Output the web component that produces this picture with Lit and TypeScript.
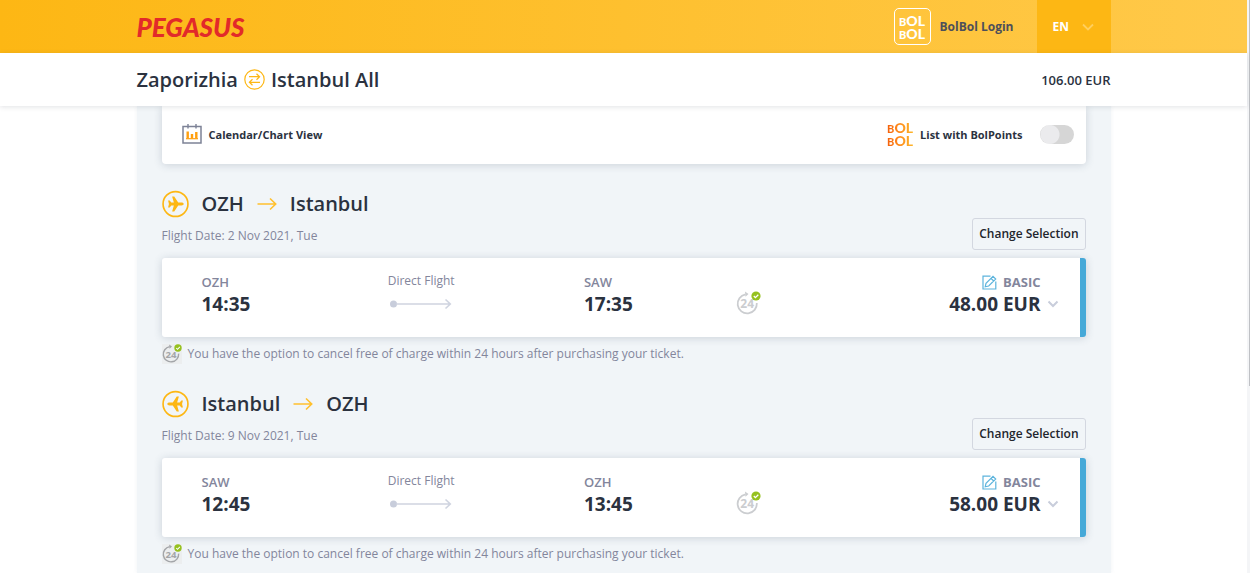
import { LitElement, html, css } from "lit";
import { customElement, property, state } from "lit/decorators.js";

interface Flight {
  id: string;
  from: string;
  to: string;
  date: string;
  inbound: boolean;
  depCode: string;
  depTime: string;
  arrCode: string;
  arrTime: string;
  price: string;
}

const FLIGHTS: Flight[] = [
  {
    id: "outbound", from: "OZH", to: "Istanbul", date: "2 Nov 2021, Tue", inbound: false,
    depCode: "OZH", depTime: "14:35", arrCode: "SAW", arrTime: "17:35", price: "48.00 EUR",
  },
  {
    id: "inbound", from: "Istanbul", to: "OZH", date: "9 Nov 2021, Tue", inbound: true,
    depCode: "SAW", depTime: "12:45", arrCode: "OZH", arrTime: "13:45", price: "58.00 EUR",
  },
];

const bolStyles = css`
  .bol {
    display: block;
    width: 26px;
    font: 900 14px/13px Lato, sans-serif;
  }
  .bol.warm {
    background: linear-gradient(90deg, #f4600c, #ff8a1a 45%, #fdb62b);
    -webkit-background-clip: text;
    background-clip: text;
    color: transparent;
  }
  .bol .row {
    display: flex;
    align-items: baseline;
    height: 13px;
  }
  .bol .b { font-size: 11px; }
`;

const bolRow = html`<span class="row"><span class="b">B</span><span>OL</span></span>`;

const bolMark = (tone: string) => html`<span class="bol ${tone}">${bolRow}${bolRow}</span>`;

const plane = (flip: boolean) => html`
  <svg width="27" height="28" viewBox="0 0 28 28" aria-hidden="true">
    <circle cx="14" cy="14" r="12.9" fill="none" stroke="#fdb714" stroke-width="1.7"></circle>
    <path
      transform=${flip ? "translate(28 0) scale(-1 1)" : ""}
      fill="#fdb714"
      d="M22.500 14c0 .9-1 1.500-2.400 1.500h-3.300L12.700 21.800h-2.200l1.800-6.300H9.600l-1.600 2.100H6.300L7.200 14 6.300 10.400H8l1.600 2.100h2.700L10.500 6.200h2.200l4.100 6.300h3.300c1.400 0 2.400.6 2.400 1.500z"
    ></path>
  </svg>`;

const badge24 = (size: number, color: string) => html`
  <svg width=${size} height=${size} viewBox="0 0 25 25" role="img" aria-label="24 hours">
    <path d="M9.500 3.300A9.600 9.600 0 1 0 20.800 12" fill="none" stroke=${color} stroke-width="1.800"></path>
    <path d="M9 0.600L12.500 3L9.500 5.800z" fill=${color}></path>
    <text x="11.200" y="17" text-anchor="middle" font-size="12" font-weight="700"
      font-family="Open Sans, sans-serif" fill=${color}>24</text>
    <circle cx="20" cy="5" r="4.600" fill="#96c11f"></circle>
    <path d="M17.800 5l1.600 1.600 2.900-2.900" fill="none" stroke="#fff" stroke-width="1.300"></path>
  </svg>`;

@customElement("site-header")
export class SiteHeader extends LitElement {
  static styles = [bolStyles, css`
    :host { display: block; }
    .top {
      display: flex;
      height: 53px;
      background: linear-gradient(90deg, #fdb714, #ffc94a);
    }
    .inner {
      display: flex;
      align-items: center;
      width: 100%;
      max-width: 974px;
      margin: 0 auto;
    }
    .logo {
      font: italic 900 26px/28px Lato, sans-serif;
      color: #e22a2a;
      text-decoration: none;
      margin-right: auto;
    }
    .login {
      display: flex;
      align-items: center;
      gap: 9px;
      font-size: 12px;
      font-weight: 700;
      color: #4d4f5a;
      text-decoration: none;
      margin-right: 23px;
    }
    .frame {
      display: grid;
      place-items: center;
      width: 35px;
      height: 35px;
      border: 1px solid #fff;
      border-radius: 5px;
      color: #fff;
    }
    .lang {
      display: flex;
      align-items: center;
      gap: 13px;
      align-self: stretch;
      padding: 0 16px;
      width: 74px;
      border: 0;
      background: #fdb714;
      color: #fff;
      font: 700 12px/18px "Open Sans", sans-serif;
    }
    .lang svg { flex: none; }
    .route {
      background: #fff;
      box-shadow: 0 1px 5px rgba(40, 50, 70, 0.14);
      display: flex;
      height: 53px;
      position: relative;
    }
    h1 {
      display: flex;
      align-items: center;
      gap: 6px;
      margin: 0 auto 0 0;
      font-size: 20px;
      line-height: 28px;
      font-weight: 600;
    }
    .total { font-size: 13px; font-weight: 600; }
  `];

  render() {
    return html`
      <header>
        <div class="top">
          <div class="inner">
            <a class="logo" href="#home">PEGASUS</a>
            <a class="login" href="#login">
              <span class="frame">${bolMark("plain")}</span>BolBol Login
            </a>
            <button class="lang" type="button">
              EN
              <svg width="12" height="8" viewBox="0 0 12 8" aria-hidden="true">
                <path d="M1 1.500l5 5 5-5" fill="none" stroke="#ffcf5e" stroke-width="1.800"></path>
              </svg>
            </button>
          </div>
        </div>
        <div class="route">
          <div class="inner">
            <h1>
              Zaporizhia
              <svg width="21" height="21" viewBox="0 0 21 21" role="img" aria-label="to and from">
                <g fill="none" stroke="#fdb714" stroke-width="1.200">
                  <circle cx="10.500" cy="10.500" r="9.700"></circle>
                  <path d="M5 7.700H15.500M12.500 4.700L15.600 7.700l-3.100 3M16 13.300H5.500M8.500 10.300L5.400 13.300l3.100 3"></path>
                </g>
              </svg>
              Istanbul All
            </h1>
            <span class="total">106.00 EUR</span>
          </div>
        </div>
      </header>
    `;
  }
}

@customElement("flight-leg")
export class FlightLeg extends LitElement {
  @property({ attribute: false }) flight!: Flight;

  static styles = css`
    :host { display: block; }
    .head {
      display: flex;
      justify-content: space-between;
      align-items: flex-end;
      height: 60px;
    }
    .summary { align-self: flex-start; }
    h2 {
      display: flex;
      align-items: center;
      gap: 13px;
      margin: 0;
      font-size: 20px;
      line-height: 28px;
      font-weight: 600;
    }
    .date {
      margin: 7px 0 0;
      font-size: 12px;
      line-height: 22px;
      color: #83869c;
    }
    .change {
      height: 32px;
      padding: 0 6px;
      border: 1px solid #d3d7e0;
      border-radius: 3px;
      background: transparent;
      color: #22252c;
      font: 600 12px/18px "Open Sans", sans-serif;
    }
    .card {
      display: grid;
      grid-template-columns: 186fr 196fr 152fr 60fr 263fr;
      box-sizing: border-box;
      height: 79px;
      margin-top: 8px;
      padding: 14px 20px 0 40px;
      border-right: 6px solid #46a9d8;
      border-radius: 3px;
      background: #fff;
      box-shadow: 0 1px 8px rgba(50, 70, 95, 0.2);
    }
    .code, .basic {
      font-size: 13px;
      line-height: 20px;
      font-weight: 600;
      color: #83869c;
    }
    .time, .price {
      font-size: 19px;
      line-height: 24px;
      font-weight: 700;
    }
    .direct {
      display: flex;
      flex-direction: column;
      font-size: 12px;
      line-height: 18px;
      color: #83869c;
    }
    .direct svg { margin: 8px 0 0 2px; }
    .refund { padding-top: 19px; }
    .fare {
      display: grid;
      grid-template-columns: auto 12px;
      column-gap: 7px;
      justify-content: end;
      align-content: start;
      align-items: center;
    }
    .basic {
      display: flex;
      align-items: center;
      justify-content: flex-end;
      gap: 6px;
      grid-column: 1;
      font-weight: 700;
    }
    .price { grid-column: 1; }
    .toggle {
      display: grid;
      padding: 0;
      border: 0;
      background: none;
    }
    .note {
      display: flex;
      align-items: center;
      gap: 6px;
      margin: 5px 0 0;
      height: 24px;
      font-size: 12px;
      line-height: 18px;
      color: #83869c;
    }
    .tile { display: grid; background: #eceeef; }
  `;

  render() {
    const f = this.flight;
    return html`
      <section>
        <div class="head">
          <div class="summary">
            <h2>
              ${plane(f.inbound)}
              ${f.from}
              <svg width="20" height="14" viewBox="0 0 20 14" role="img" aria-label="to">
                <path d="M0.500 7H18.500M13 1.500L18.700 7L13 12.500" fill="none" stroke="#ffc02e" stroke-width="1.600"></path>
              </svg>
              ${f.to}
            </h2>
            <p class="date">Flight Date: ${f.date}</p>
          </div>
          <button class="change" type="button">Change Selection</button>
        </div>
        <div class="card">
          <div>
            <div class="code">${f.depCode}</div>
            <div class="time">${f.depTime}</div>
          </div>
          <div class="direct">
            Direct Flight
            <svg width="62" height="12" viewBox="0 0 62 12" aria-hidden="true">
              <circle cx="3.500" cy="6" r="3.500" fill="#c8cddb"></circle>
              <path d="M6 6H60M55.500 1.500L60.300 6L55.500 10.500" fill="none" stroke="#cfd4e0" stroke-width="1.600"></path>
            </svg>
          </div>
          <div>
            <div class="code">${f.arrCode}</div>
            <div class="time">${f.arrTime}</div>
          </div>
          <div class="refund">${badge24(25, "#cbcdd0")}</div>
          <div class="fare">
            <div class="basic">
              <svg width="15" height="15" viewBox="0 0 15 15" aria-hidden="true">
                <g fill="none" stroke="#5db4dd" stroke-width="1.200">
                  <path d="M8.500 1.200H1V14h12.800V6.500"></path>
                  <path d="M3.200 11.800l.8-3.500L11 1.300l2.700 2.700-7 7zM9 3.300L11.700 6"></path>
                </g>
              </svg>
              BASIC
            </div>
            <div class="price">${f.price}</div>
            <button class="toggle" type="button" aria-label="Show fare details">
              <svg width="12" height="8" viewBox="0 0 12 8" aria-hidden="true">
                <path d="M1.500 1.500L6 6l4.500-4.500" fill="none" stroke="#c8cddb" stroke-width="2"></path>
              </svg>
            </button>
          </div>
        </div>
        <p class="note">
          <span class="tile">${badge24(20, "#a3a5a8")}</span>
          You have the option to cancel free of charge within 24 hours after purchasing your ticket.
        </p>
      </section>
    `;
  }
}

@customElement("app-root")
export class AppRoot extends LitElement {
  @state() private points = false;

  static styles = [bolStyles, css`
    :host {
      display: flex;
      min-height: 100vh;
      background: #fff;
      color: #2b323f;
      font-family: "Open Sans", sans-serif;
    }
    .page {
      display: flex;
      flex-direction: column;
      flex: 1;
      min-width: 0;
    }
    .rail {
      width: 3px;
      background: #f4f5f7;
      display: flex;
      justify-content: flex-end;
      flex-shrink: 0;
    }
    .thumb { width: 1px; height: 67.3%; background: #bfc1c5; }
    main {
      box-sizing: border-box;
      flex: 1;
      width: 100%;
      max-width: 974px;
      margin: 0 auto;
      padding: 0 25px;
      background: #f1f5f8;
      box-shadow: 0 0 4px rgba(150, 165, 185, 0.15);
    }
    .options {
      display: flex;
      align-items: center;
      justify-content: space-between;
      box-sizing: border-box;
      height: 58px;
      margin-bottom: 26px;
      padding: 0 12px 2px 20px;
      border-radius: 0 0 4px 4px;
      background: #fff;
      box-shadow: 0 1px 8px rgba(50, 70, 95, 0.2);
      font-size: 11px;
      font-weight: 700;
    }
    .view, .points {
      display: flex;
      align-items: center;
      gap: 7px;
      padding: 0;
      border: 0;
      background: none;
      color: inherit;
      font: inherit;
    }
    .switch {
      appearance: none;
      width: 34px;
      height: 19px;
      margin: 0 0 0 10px;
      border-radius: 10px;
      background: radial-gradient(circle at 10px 50%, #ebebed 9px, transparent 10px), #d6d6d6;
    }
    .switch:checked {
      background: radial-gradient(circle at 24px 50%, #fff 9px, transparent 10px), #fdb714;
    }
    flight-leg { margin-bottom: 24px; }
    flight-leg:last-child { margin-bottom: 0; }
  `];

  render() {
    return html`
      <div class="page">
        <site-header></site-header>
        <main>
          <div class="options">
            <button class="view" type="button">
              <svg width="20" height="20" viewBox="0 0 20 20" aria-hidden="true">
                <path d="M1 2.500h18V19H1z" fill="none" stroke="#7d8296" stroke-width="1.500"></path>
                <path d="M6 0v4.500M14 0v4.500" stroke="#7d8296" stroke-width="1.400"></path>
                <path d="M4 14.700h12" stroke="#ff9f0f" stroke-width="1.200"></path>
                <path d="M5.700 7.500v7M10 10v4.500M14.300 8v6.500" stroke="#ff9f0f" stroke-width="2.400"></path>
              </svg>
              Calendar/Chart View
            </button>
            <label class="points">
              ${bolMark("warm")}
              List with BolPoints
              <input
                class="switch"
                type="checkbox"
                role="switch"
                .checked=${this.points}
                @change=${(e: Event) => (this.points = (e.target as HTMLInputElement).checked)}
              />
            </label>
          </div>
          ${FLIGHTS.map((f) => html`<flight-leg id=${f.id} .flight=${f}></flight-leg>`)}
        </main>
      </div>
      <div class="rail" aria-hidden="true"><div class="thumb"></div></div>
    `;
  }
}
